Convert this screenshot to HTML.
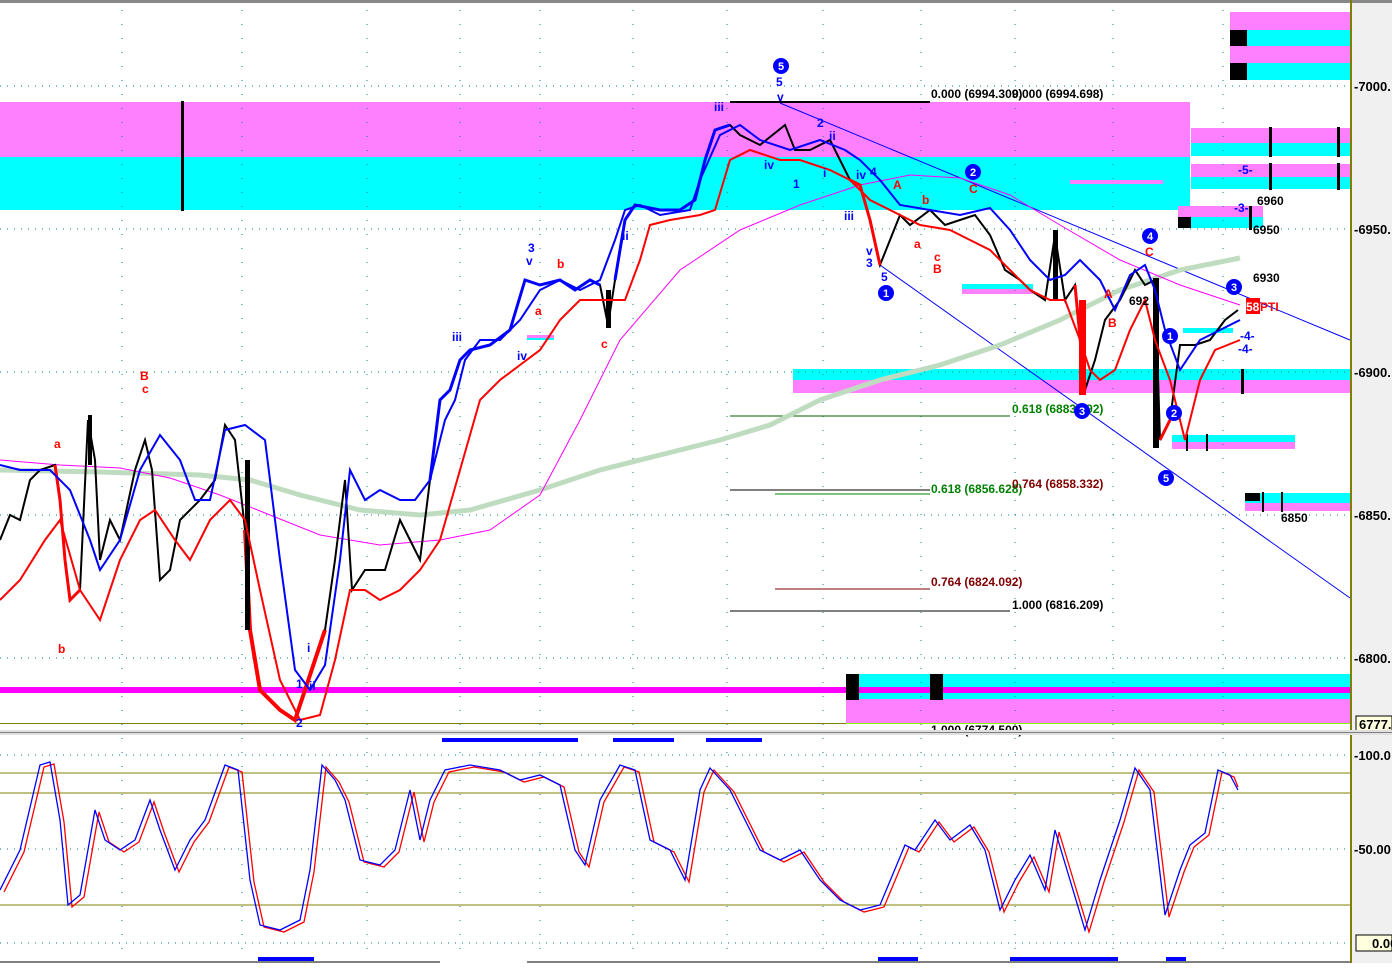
<!DOCTYPE html>
<html><head><meta charset="utf-8"><style>
html,body{margin:0;padding:0;background:#fff;}
body{width:1392px;height:963px;overflow:hidden;font-family:"Liberation Sans",sans-serif;}
svg text{font-family:"Liberation Sans",sans-serif;font-weight:bold;}
</style></head><body>
<svg width="1392" height="963" viewBox="0 0 1392 963" xmlns="http://www.w3.org/2000/svg">
<rect x="0" y="0" width="1392" height="963" fill="#fff"/>
<!-- right axis panel -->
<rect x="1352" y="0" width="40" height="963" fill="#f0f0f0"/>
<rect x="0" y="0" width="1392" height="3" fill="#888"/>
<!-- main pane bands -->
<rect x="0" y="102" width="1190" height="55" fill="#ff80ff"/>
<rect x="0" y="157" width="1190" height="53" fill="#00ffff"/>
<rect x="181" y="101" width="3" height="110" fill="#000"/>
<rect x="1230" y="12" width="120" height="18" fill="#ff80ff"/>
<rect x="1230" y="30" width="120" height="16" fill="#00ffff"/>
<rect x="1230" y="46" width="120" height="17" fill="#ff80ff"/>
<rect x="1230" y="63" width="120" height="17" fill="#00ffff"/>
<rect x="1230" y="30" width="17" height="16" fill="#000"/>
<rect x="1230" y="63" width="17" height="17" fill="#000"/>
<rect x="1191" y="128" width="159" height="15" fill="#ff80ff"/>
<rect x="1191" y="143" width="159" height="13" fill="#00ffff"/>
<rect x="1191" y="164" width="159" height="13" fill="#ff80ff"/>
<rect x="1191" y="177" width="159" height="12" fill="#00ffff"/>
<rect x="1269" y="127" width="3" height="30" fill="#000"/><rect x="1337" y="127" width="3" height="30" fill="#000"/>
<rect x="1269" y="163" width="3" height="27" fill="#000"/><rect x="1337" y="163" width="3" height="27" fill="#000"/>
<rect x="1178" y="206" width="85" height="11" fill="#ff80ff"/>
<rect x="1178" y="217" width="85" height="11" fill="#00ffff"/>
<rect x="1178" y="217" width="13" height="11" fill="#000"/>
<rect x="1249" y="206" width="3" height="24" fill="#000"/>
<rect x="1070" y="180" width="93" height="4" fill="#ff80ff"/>
<rect x="962" y="284" width="71" height="5" fill="#00ffff"/><rect x="962" y="289" width="71" height="5" fill="#ff80ff"/>
<rect x="793" y="369" width="557" height="11" fill="#00ffff"/>
<rect x="793" y="380" width="557" height="13" fill="#ff80ff"/>
<rect x="1241" y="369" width="3" height="25" fill="#000"/>
<rect x="1172" y="435" width="123" height="7" fill="#00ffff"/>
<rect x="1172" y="442" width="123" height="7" fill="#ff80ff"/>
<rect x="1186" y="434" width="2" height="17" fill="#000"/><rect x="1206" y="434" width="2" height="17" fill="#000"/>
<rect x="1245" y="493" width="105" height="10" fill="#00ffff"/>
<rect x="1245" y="503" width="105" height="8" fill="#ff80ff"/>
<rect x="1245" y="493" width="15" height="8" fill="#000"/>
<rect x="1262" y="492" width="2" height="20" fill="#000"/><rect x="1281" y="492" width="2" height="20" fill="#000"/>
<rect x="1183" y="328" width="50" height="5" fill="#00ffff"/>
<rect x="553" y="335" width="0" height="0"/>
<rect x="527" y="335" width="27" height="3" fill="#ff80ff"/><rect x="527" y="338" width="27" height="2" fill="#00ffff"/>
<!-- bottom band -->
<rect x="846" y="674" width="504" height="14" fill="#00ffff"/>
<rect x="846" y="693" width="504" height="6" fill="#00ffff"/>
<rect x="846" y="699" width="504" height="25" fill="#ff80ff"/>
<rect x="0" y="687" width="1350" height="6" fill="#ff00ff"/>
<rect x="846" y="674" width="13" height="26" fill="#000"/>
<rect x="930" y="674" width="13" height="26" fill="#000"/>
<rect x="0" y="723" width="846" height="1" fill="#808000"/>
<rect x="846" y="723" width="504" height="1" fill="#80ff00"/>
<!-- grid dotted -->
<g stroke="#008080" stroke-width="1" stroke-dasharray="1,6">
<line x1="0" y1="86" x2="1350" y2="86"/><line x1="0" y1="229" x2="1350" y2="229"/>
<line x1="0" y1="372" x2="1350" y2="372"/><line x1="0" y1="515" x2="1350" y2="515"/>
<line x1="0" y1="658" x2="1350" y2="658"/>
<line x1="0" y1="755" x2="1350" y2="755"/><line x1="0" y1="849" x2="1350" y2="849"/><line x1="0" y1="943" x2="1350" y2="943"/>
</g>
<g stroke="#008080" stroke-width="1" stroke-dasharray="1,13">
<line x1="122" y1="10" x2="122" y2="960"/><line x1="242" y1="10" x2="242" y2="960"/>
<line x1="367" y1="10" x2="367" y2="960"/><line x1="460" y1="10" x2="460" y2="960"/>
<line x1="540" y1="10" x2="540" y2="960"/><line x1="633" y1="10" x2="633" y2="960"/>
<line x1="727" y1="10" x2="727" y2="960"/><line x1="823" y1="10" x2="823" y2="960"/>
<line x1="921" y1="10" x2="921" y2="960"/><line x1="1015" y1="10" x2="1015" y2="960"/>
<line x1="1113" y1="10" x2="1113" y2="960"/><line x1="1223" y1="10" x2="1223" y2="960"/>
</g>
<!-- fib lines -->
<line x1="730" y1="102" x2="930" y2="102" stroke="#000" stroke-width="2"/>
<line x1="730" y1="416" x2="1010" y2="416" stroke="#006000" stroke-width="1"/>
<line x1="730" y1="490" x2="930" y2="490" stroke="#000" stroke-width="1"/>
<line x1="775" y1="494" x2="930" y2="494" stroke="#008000" stroke-width="1"/>
<line x1="775" y1="589" x2="930" y2="589" stroke="#800000" stroke-width="1"/>
<line x1="730" y1="611" x2="1010" y2="611" stroke="#000" stroke-width="1"/>
<g font-size="12">
<text x="931" y="98" fill="#000">0.000 (6994.309)</text>
<text x="1012" y="98" fill="#000">0.000 (6994.698)</text>
<text x="1012" y="413" fill="#008000">0.618 (6883.392)</text>
<text x="931" y="493" fill="#008000">0.618 (6856.628)</text>
<text x="1012" y="488" fill="#800000">0.764 (6858.332)</text>
<text x="931" y="586" fill="#800000">0.764 (6824.092)</text>
<text x="1012" y="609" fill="#000">1.000 (6816.209)</text>
<text x="931" y="734" fill="#000">1.000 (6774.500)</text>
</g>
<!-- trend lines -->
<line x1="780" y1="103" x2="1350" y2="340" stroke="#0000ff" stroke-width="1"/>
<line x1="880" y1="265" x2="1350" y2="598" stroke="#0000ff" stroke-width="1"/>
<!-- MAs -->
<polyline fill="none" stroke="#c0dcc0" stroke-width="5" points="0,470 100,472 200,475 250,480 300,495 360,510 420,515 470,510 540,490 600,470 660,455 720,440 770,425 820,400 880,380 940,365 1000,345 1060,320 1120,290 1180,270 1240,258"/>
<polyline fill="none" stroke="#ff00ff" stroke-width="1" points="0,460 60,465 120,468 170,478 220,495 270,515 320,535 380,545 440,540 490,530 540,495 580,420 620,340 680,270 740,230 800,205 860,185 910,175 960,178 1010,195 1060,225 1120,260 1180,285 1240,305"/>
<!-- price -->
<polyline fill="none" stroke="#000" stroke-width="2" points="0,540 10,515 20,520 30,480 40,470 55,465 60,500 65,560 70,600 80,590 88,420 95,460 100,560 110,520 120,540 135,470 145,440 152,470 160,580 170,570 180,520 200,500 215,480 225,425 235,440 245,530 250,630 260,690 270,700 280,710 295,720 305,690 315,660 325,630 335,560 345,480 352,590 365,570 385,570 400,520 410,540 420,560 430,480 440,400 450,390 460,360 470,350 490,345 510,330 525,280 540,285 560,280 575,290 590,280 600,285 608,325 615,280 625,220 635,205 660,210 680,210 695,200 705,160 715,130 730,125 740,135 760,145 785,125 795,150 810,150 830,140 840,160 850,180 860,185 870,220 880,265 890,240 900,215 910,225 930,210 945,225 960,220 975,215 990,235 1005,270 1020,280 1030,290 1045,300 1055,235 1065,300 1075,285 1085,390 1095,360 1105,320 1120,300 1135,270 1145,285 1155,280 1160,440 1170,420 1180,345 1195,345 1210,340 1225,320 1238,310"/>
<polyline fill="none" stroke="#ff0000" stroke-width="4" points="245,530 250,630 260,690 270,700 280,710 295,720 305,690 315,660 325,630"/>
<polyline fill="none" stroke="#ff0000" stroke-width="3" points="55,465 60,500 65,560 70,600 80,590"/>
<polyline fill="none" stroke="#ff0000" stroke-width="3" points="850,180 860,185 870,220 880,265"/>
<polyline fill="none" stroke="#ff0000" stroke-width="3" points="1075,285 1085,390"/>
<polyline fill="none" stroke="#ff0000" stroke-width="3" points="1160,440 1170,420"/>
<polyline fill="none" stroke="#0000ff" stroke-width="3" points="430,480 440,400 450,390 460,360 470,350 490,345 510,330 525,280 540,285 560,280 575,290 590,280 600,285"/>
<polyline fill="none" stroke="#0000ff" stroke-width="3" points="615,280 625,220 635,205 660,210 680,210 695,200 705,160 715,130 730,125"/>
<rect x="88" y="415" width="4" height="50" fill="#000"/><rect x="245" y="460" width="5" height="170" fill="#000"/>
<rect x="1053" y="230" width="5" height="70" fill="#000"/><rect x="1153" y="278" width="6" height="170" fill="#000"/>
<rect x="606" y="290" width="5" height="38" fill="#000"/><rect x="1079" y="300" width="7" height="95" fill="#f00"/>
<!-- bands -->
<polyline fill="none" stroke="#0000ff" stroke-width="2" points="0,465 20,470 50,470 70,490 90,540 100,570 120,540 140,470 160,435 180,460 195,500 210,500 225,430 245,425 265,440 280,560 295,670 310,690 325,665 340,560 350,470 365,500 380,490 400,500 415,500 430,480 445,420 455,400 465,360 480,340 500,340 520,320 540,290 560,280 580,290 600,280 615,240 625,210 640,205 660,215 690,210 700,180 720,135 740,125 760,140 790,150 820,140 845,150 860,160 880,180 900,205 930,210 960,215 990,208 1010,230 1030,260 1050,280 1065,275 1080,260 1100,280 1115,310 1130,275 1145,265 1155,290 1165,330 1180,370 1200,340 1220,330 1240,320"/>
<polyline fill="none" stroke="#ff0000" stroke-width="2" points="0,600 20,580 45,540 60,520 80,590 100,620 120,560 140,520 155,510 175,540 190,560 210,520 230,500 245,520 260,590 280,680 300,720 320,715 335,660 350,590 365,590 380,600 400,590 420,570 440,540 460,470 480,400 500,380 520,365 540,350 560,320 580,300 610,300 625,300 640,260 650,225 670,220 700,215 715,210 730,160 750,150 780,160 800,160 830,170 850,180 870,200 900,215 920,225 950,230 970,240 990,250 1010,270 1030,290 1050,300 1065,300 1080,340 1090,370 1100,380 1115,370 1130,330 1145,300 1155,340 1170,380 1185,440 1200,380 1215,350 1240,340"/>
<!-- wave labels -->
<g font-size="12">
<text x="528" y="252" fill="#0000ff">3</text><text x="526" y="265" fill="#0000ff">v</text>
<text x="557" y="268" fill="#ff0000">b</text><text x="535" y="315" fill="#ff0000">a</text>
<text x="452" y="341" fill="#0000ff">iii</text><text x="517" y="360" fill="#0000ff">iv</text>
<text x="601" y="348" fill="#ff0000">c</text><text x="622" y="240" fill="#0000ff">ii</text>
<text x="140" y="380" fill="#ff0000">B</text><text x="142" y="393" fill="#ff0000">c</text>
<text x="54" y="448" fill="#ff0000">a</text><text x="58" y="653" fill="#ff0000">b</text>
<text x="307" y="652" fill="#0000ff">i</text><text x="296" y="688" fill="#0000ff">1</text>
<text x="309" y="690" fill="#0000ff">ii</text><text x="296" y="727" fill="#0000ff">2</text>
<text x="776" y="86" fill="#0000ff">5</text><text x="777" y="101" fill="#0000ff">v</text>
<text x="714" y="111" fill="#0000ff">iii</text><text x="764" y="169" fill="#0000ff">iv</text>
<text x="793" y="188" fill="#0000ff">1</text><text x="817" y="127" fill="#0000ff">2</text>
<text x="829" y="140" fill="#0000ff">ii</text><text x="823" y="177" fill="#0000ff">i</text>
<text x="856" y="179" fill="#0000ff">iv</text><text x="870" y="176" fill="#0000ff">4</text>
<text x="844" y="220" fill="#0000ff">iii</text><text x="866" y="255" fill="#0000ff">v</text>
<text x="866" y="267" fill="#0000ff">3</text><text x="881" y="281" fill="#0000ff">5</text>
<text x="893" y="189" fill="#ff0000">A</text><text x="922" y="204" fill="#ff0000">b</text>
<text x="914" y="248" fill="#ff0000">a</text><text x="934" y="261" fill="#ff0000">c</text>
<text x="933" y="273" fill="#ff0000">B</text><text x="969" y="193" fill="#ff0000">C</text>
<text x="1104" y="298" fill="#ff0000">A</text><text x="1108" y="327" fill="#ff0000">B</text>
<text x="1145" y="256" fill="#ff0000">C</text><text x="1129" y="305" fill="#000">692</text>
<text x="1253" y="282" fill="#000">6930</text><text x="1257" y="205" fill="#000">6960</text>
<text x="1253" y="234" fill="#000">6950</text><text x="1281" y="522" fill="#000">6850</text>
<text x="1238" y="174" fill="#0000ff" font-weight="normal">-5-</text>
<text x="1234" y="212" fill="#0000ff" font-weight="normal">-3-</text>
<text x="1240" y="340" fill="#0000ff" font-weight="normal">-4-</text>
<text x="1238" y="353" fill="#0000ff" font-weight="normal">-4-</text>
</g>
<rect x="1246" y="298" width="14" height="16" fill="#ff0000"/>
<text x="1246" y="311" font-size="12" fill="#fff">58</text>
<text x="1260" y="311" font-size="12" fill="#ff0000">PTI</text>
<!-- circled numbers -->
<g font-size="11" fill="#fff" text-anchor="middle">
<circle cx="781" cy="66" r="8" fill="#0000ff"/><text x="781" y="70">5</text>
<circle cx="973" cy="172" r="8" fill="#0000ff"/><text x="973" y="176">2</text>
<circle cx="886" cy="293" r="8" fill="#0000ff"/><text x="886" y="297">1</text>
<circle cx="1150" cy="236" r="8" fill="#0000ff"/><text x="1150" y="240">4</text>
<circle cx="1082" cy="411" r="8" fill="#0000ff"/><text x="1082" y="415">3</text>
<circle cx="1170" cy="336" r="8" fill="#0000ff"/><text x="1170" y="340">1</text>
<circle cx="1174" cy="413" r="8" fill="#0000ff"/><text x="1174" y="417">2</text>
<circle cx="1166" cy="478" r="8" fill="#0000ff"/><text x="1166" y="482">5</text>
<circle cx="1234" cy="287" r="8" fill="#0000ff"/><text x="1234" y="291">3</text>
</g>
<!-- right axis -->
<rect x="1350" y="0" width="2" height="963" fill="#808000"/>
<g font-size="13" fill="#000">
<text x="1354" y="91">-7000.</text><text x="1354" y="234">-6950.</text>
<text x="1354" y="377">-6900.</text><text x="1354" y="520">-6850.</text>
<text x="1354" y="663">-6800.</text>
<text x="1354" y="760">-100.0</text><text x="1354" y="854">-50.00</text>
</g>
<rect x="1356" y="716" width="36" height="16" fill="#ffffe0" stroke="#000" stroke-width="1"/>
<text x="1359" y="729" font-size="13" fill="#000">6777.</text>
<rect x="1356" y="935" width="36" height="16" fill="#ffffe0" stroke="#000" stroke-width="1"/>
<text x="1372" y="948" font-size="13" fill="#000">0.00</text>
<!-- pane separator -->
<rect x="0" y="730" width="1392" height="5" fill="#e0e0e0"/>
<rect x="0" y="732" width="1392" height="1" fill="#808080"/>
<!-- lower pane -->
<line x1="0" y1="773" x2="1350" y2="773" stroke="#808000" stroke-width="1"/>
<line x1="0" y1="793" x2="1350" y2="793" stroke="#808000" stroke-width="1"/>
<line x1="0" y1="905" x2="1350" y2="905" stroke="#808000" stroke-width="1"/>
<rect x="442" y="738" width="136" height="4" fill="#0000ff"/>
<rect x="613" y="738" width="61" height="4" fill="#0000ff"/>
<rect x="706" y="738" width="56" height="4" fill="#0000ff"/>
<rect x="258" y="957" width="56" height="4" fill="#0000ff"/>
<rect x="878" y="957" width="40" height="4" fill="#0000ff"/>
<rect x="1010" y="957" width="108" height="4" fill="#0000ff"/>
<rect x="1166" y="957" width="20" height="4" fill="#0000ff"/>
<polyline fill="none" stroke="#ff0000" stroke-width="1.3" transform="translate(4,2)" points="0,890 20,850 40,765 50,762 60,820 68,905 80,895 95,810 105,840 120,850 135,840 150,800 160,830 175,870 190,840 205,820 225,765 238,770 250,880 260,925 280,930 300,920 310,870 322,765 335,780 345,800 360,860 380,865 395,850 410,790 420,840 430,800 445,770 470,765 500,770 520,780 540,775 560,785 575,850 585,865 600,800 620,765 635,770 650,840 670,850 685,880 700,790 710,768 730,790 760,850 780,860 800,850 820,880 840,900 860,910 880,905 905,845 915,850 935,820 950,840 970,825 985,850 1000,910 1015,880 1030,855 1045,890 1055,830 1070,880 1085,930 1100,880 1120,820 1135,768 1150,790 1165,915 1180,870 1190,845 1205,833 1218,770 1230,775 1234,785"/>
<polyline fill="none" stroke="#0000ff" stroke-width="1.3" points="0,890 20,850 40,765 50,762 60,820 68,905 80,895 95,810 105,840 120,850 135,840 150,800 160,830 175,870 190,840 205,820 225,765 238,770 250,880 260,925 280,930 300,920 310,870 322,765 335,780 345,800 360,860 380,865 395,850 410,790 420,840 430,800 445,770 470,765 500,770 520,780 540,775 560,785 575,850 585,865 600,800 620,765 635,770 650,840 670,850 685,880 700,790 710,768 730,790 760,850 780,860 800,850 820,880 840,900 860,910 880,905 905,845 915,850 935,820 950,840 970,825 985,850 1000,910 1015,880 1030,855 1045,890 1055,830 1070,880 1085,930 1100,880 1120,820 1135,768 1150,790 1165,915 1180,870 1190,845 1205,833 1218,770 1230,775 1238,790"/>
<line x1="0" y1="962" x2="440" y2="962" stroke="#000" stroke-width="1"/>
<line x1="527" y1="962" x2="1350" y2="962" stroke="#000" stroke-width="1"/>
</svg>
</body></html>
